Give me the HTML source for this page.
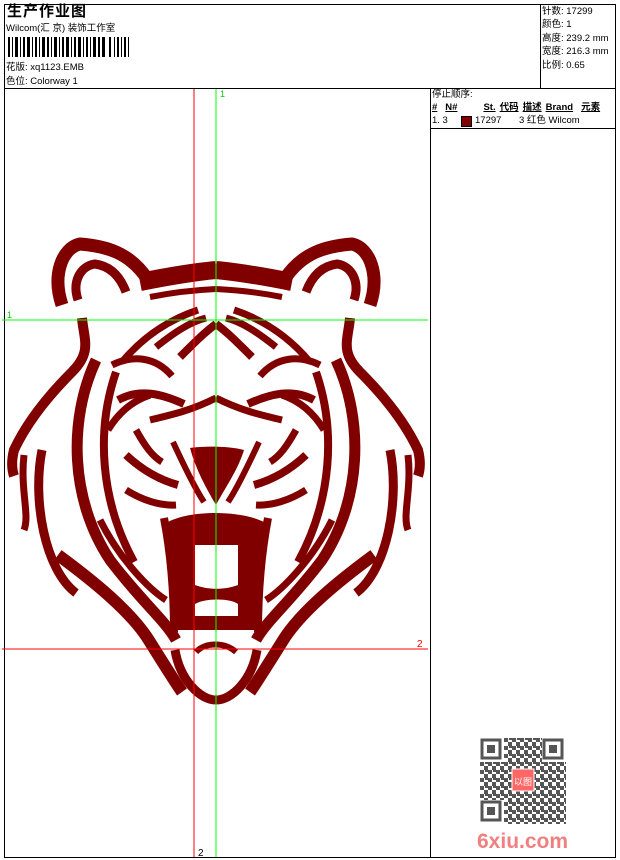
<!DOCTYPE html><html><head><style>
body{margin:0;width:620px;height:860px;background:#fff;position:relative;font-family:"Liberation Sans","Noto Sans CJK SC",sans-serif;font-size:9.5px;color:#000;overflow:hidden}
.a{position:absolute;white-space:nowrap;line-height:12px}
.l{position:absolute;background:#000}
</style></head><body>
<div class="l" style="left:4px;top:4px;width:612px;height:1px"></div>
<div class="l" style="left:4px;top:857px;width:612px;height:1px"></div>
<div class="l" style="left:4px;top:4px;width:1px;height:854px"></div>
<div class="l" style="left:615px;top:4px;width:1px;height:854px"></div>
<div class="l" style="left:4px;top:88px;width:612px;height:1px"></div>
<div class="l" style="left:540px;top:4px;width:1px;height:84px"></div>
<div class="l" style="left:430px;top:88px;width:1px;height:770px"></div>
<div class="l" style="left:430px;top:128px;width:186px;height:1px"></div>
<div class="a" style="left:7px;top:4px;font-size:15px;line-height:16px;font-weight:bold;letter-spacing:1px">生产作业图</div>
<div class="a" style="left:6px;top:23px">Wilcom(汇 京) 装饰工作室</div>
<svg class="a" style="left:8px;top:37px" width="124" height="20">
<g fill="#000">
<rect x="0" y="0" width="2" height="20"/><rect x="4" y="0" width="1" height="20"/><rect x="7" y="0" width="3" height="20"/><rect x="12" y="0" width="1" height="20"/><rect x="15" y="0" width="2" height="20"/><rect x="19" y="0" width="3" height="20"/><rect x="24" y="0" width="1" height="20"/><rect x="27" y="0" width="2" height="20"/><rect x="31" y="0" width="1" height="20"/><rect x="34" y="0" width="3" height="20"/><rect x="39" y="0" width="2" height="20"/><rect x="43" y="0" width="1" height="20"/><rect x="46" y="0" width="3" height="20"/><rect x="51" y="0" width="1" height="20"/><rect x="54" y="0" width="2" height="20"/><rect x="58" y="0" width="3" height="20"/><rect x="63" y="0" width="1" height="20"/><rect x="66" y="0" width="2" height="20"/><rect x="70" y="0" width="3" height="20"/><rect x="75" y="0" width="1" height="20"/><rect x="78" y="0" width="2" height="20"/><rect x="82" y="0" width="1" height="20"/><rect x="85" y="0" width="3" height="20"/><rect x="90" y="0" width="2" height="20"/><rect x="94" y="0" width="3" height="20"/><rect x="101" y="0" width="2" height="20"/><rect x="106" y="0" width="1" height="20"/><rect x="109" y="0" width="2" height="20"/><rect x="113" y="0" width="1" height="20"/><rect x="116" y="0" width="2" height="20"/><rect x="120" y="0" width="1" height="20"/>
</g></svg>
<div class="a" style="left:6px;top:62px">花版: xq1123.EMB</div>
<div class="a" style="left:6px;top:76px">色位: Colorway 1</div>
<div class="a" style="left:542px;top:5px;line-height:13.4px">针数: 17299<br>颜色: 1<br>高度: 239.2 mm<br>宽度: 216.3 mm<br>比例: 0.65</div>
<div class="a" style="left:432px;top:89px">停止顺序:</div>
<div class="a" style="left:432px;top:102px;font-weight:bold;text-decoration:underline;font-size:9.5px"><span>#</span><span style="margin-left:8px">N#</span><span style="margin-left:26px">St.</span><span style="margin-left:4px">代码</span><span style="margin-left:4px">描述</span><span style="margin-left:4px">Brand</span><span style="margin-left:8px">元素</span></div>
<div class="a" style="left:432px;top:115px">1. 3</div>
<div class="a" style="left:461px;top:116px;width:9px;height:9px;background:#800000;border:1px solid #000"></div>
<div class="a" style="left:475px;top:115px">17297</div>
<div class="a" style="left:519px;top:115px">3 红色 Wilcom</div>

<svg class="a" style="left:0;top:0" width="430" height="860">
<g stroke="#800000" fill="none" stroke-linecap="butt" stroke-linejoin="round">
<g id="h">
<path d="M62,305 C52,275 62,248 80,244 C105,246 130,252 148,280" stroke-width="13"/>
<path d="M78,300 C72,282 80,266 95,264 C110,266 120,276 126,292" stroke-width="9"/>
<path d="M140,282 C170,276 195,272 216,270" stroke-width="18"/>
<path d="M150,297 C175,292 195,290 216,289" stroke-width="6"/>
<path d="M82,318 C84,340 92,352 72,372 C50,394 28,420 14,450 C11,462 12,470 14,476" stroke-width="10"/>
<path d="M24,455 C20,490 30,515 24,530" stroke-width="7"/>
<path d="M42,450 C32,500 45,570 76,593" stroke-width="9"/>
<path d="M96,360 C68,420 70,500 110,560 C140,600 165,620 176,640" stroke-width="11"/>
<path d="M116,372 C96,430 100,500 134,562" stroke-width="8"/>
<path d="M122,362 C142,338 168,320 198,310" stroke-width="7"/>
<path d="M156,347 C175,332 190,322 206,318" stroke-width="7"/>
<path d="M180,357 C195,342 205,332 216,324" stroke-width="8"/>
<path d="M112,365 C132,355 155,356 172,376" stroke-width="7"/>
<path d="M118,400 C140,388 162,394 184,404" stroke-width="8"/>
<path d="M150,420 C175,414 192,410 216,398" stroke-width="7"/>
<path d="M108,430 C120,410 135,400 150,395" stroke-width="7"/>
<path d="M136,430 C145,446 152,456 162,462" stroke-width="7"/>
<path d="M126,455 C142,470 160,480 178,485" stroke-width="8"/>
<path d="M126,490 C142,500 160,506 176,505" stroke-width="7"/>
<path d="M173,442 C186,470 196,490 204,502" stroke-width="6"/>
<path d="M58,555 C92,580 132,612 150,642 C165,666 175,682 182,692" stroke-width="12"/>
<path d="M164,518 C172,560 174,600 174,632" stroke-width="8"/>
<path d="M100,520 C120,560 150,590 166,600" stroke-width="7"/>
</g>
<use href="#h" transform="translate(432,0) scale(-1,1)"/>
<path d="M175,650 C180,680 200,700 216,700 C232,700 252,680 257,650" stroke-width="9"/>
<path d="M196,652 C205,642 225,642 236,652" stroke-width="6"/>
</g>
<g fill="#800000">
<path d="M190,448 C205,446 228,446 244,450 C238,470 225,488 216,505 C206,488 196,470 190,448Z"/>
<rect x="172" y="544" width="90" height="86"/>
<path d="M168,522 C190,510 240,510 264,522 L262,548 L172,548Z"/>
</g>
<g fill="#fff">
<path d="M195,545 L238,545 L238,585 C225,590 208,590 195,585Z"/>
<path d="M195,604 C205,598 230,598 238,604 L238,616 L195,616Z"/>
</g>
<line x1="194" y1="89" x2="194" y2="857" stroke="#f00" stroke-width="1"/>
<line x1="216" y1="89" x2="216" y2="857" stroke="#0f0" stroke-width="1"/>
<line x1="2" y1="320" x2="428" y2="320" stroke="#0f0" stroke-width="1"/>
<line x1="2" y1="649" x2="428" y2="649" stroke="#f00" stroke-width="1"/>
<text x="220" y="97" fill="#0c0" font-size="9" font-family="Liberation Sans">1</text>
<text x="7" y="318" fill="#0c0" font-size="9" font-family="Liberation Sans">1</text>
<text x="417" y="647" fill="#f00" font-size="10" font-family="Liberation Sans">2</text>
<text x="198" y="856" fill="#000" font-size="10" font-family="Liberation Sans">2</text>
</svg>

<svg class="a" style="left:480px;top:738px" width="86" height="86">
<defs><pattern id="q" width="8" height="8" patternUnits="userSpaceOnUse"><rect x="0" y="0" width="4" height="4" fill="#555"/><rect x="4" y="4" width="4" height="4" fill="#555"/><rect x="5" y="0" width="3" height="2" fill="#555"/></pattern></defs>
<rect x="0" y="0" width="86" height="86" fill="url(#q)"/>
<g fill="#fff"><rect x="0" y="0" width="24" height="24"/><rect x="62" y="0" width="24" height="24"/><rect x="0" y="62" width="24" height="24"/></g>
<g fill="none" stroke="#555" stroke-width="3"><rect x="2" y="2" width="18" height="18"/><rect x="64" y="2" width="18" height="18"/><rect x="2" y="64" width="18" height="18"/></g>
<g fill="#555"><rect x="7" y="7" width="8" height="8"/><rect x="69" y="7" width="8" height="8"/><rect x="7" y="69" width="8" height="8"/></g>
<rect x="32" y="31" width="22" height="22" fill="#f66" stroke="#fff" stroke-width="1"/>
<text x="43" y="47" fill="#fff" font-size="9" text-anchor="middle" font-family="Noto Sans CJK SC">以图</text>
</svg>
<div class="a" style="left:477px;top:830px;font-size:21px;line-height:24px;font-weight:bold;color:#f08080">6xiu.com</div>
</body></html>
